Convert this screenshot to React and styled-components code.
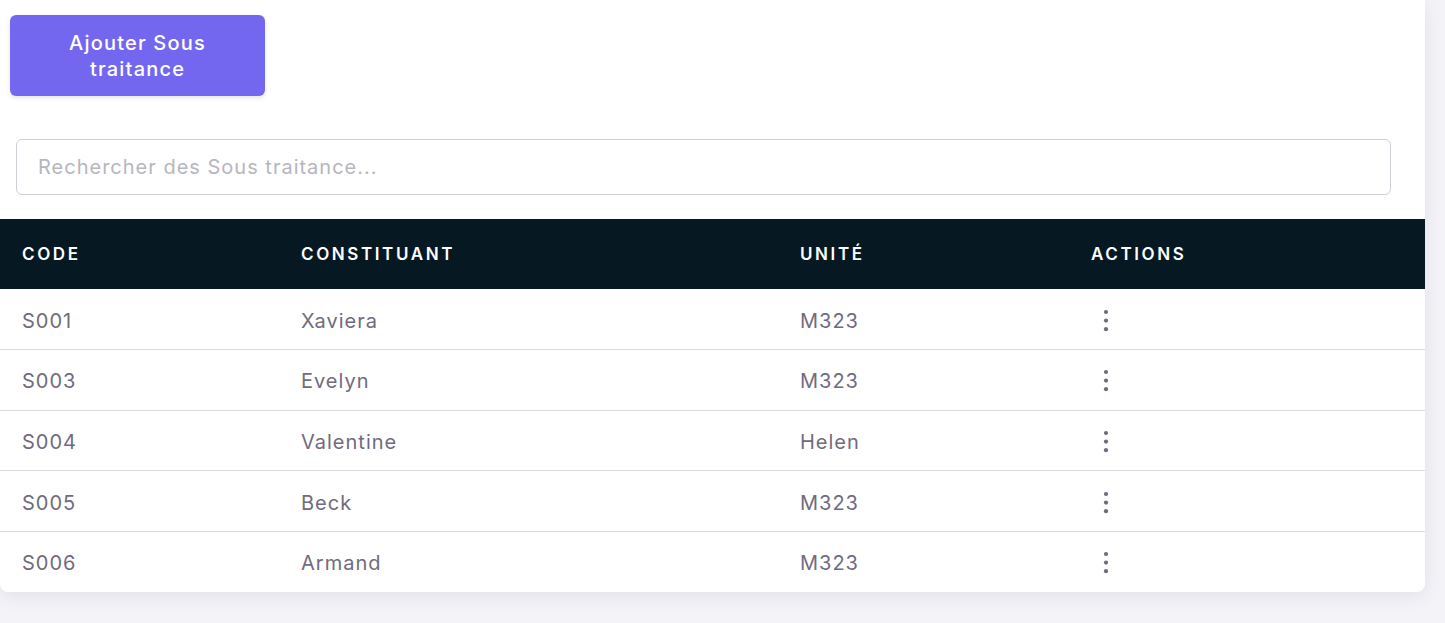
import React, { useState } from "react";
import styled, { createGlobalStyle } from "styled-components";

const GlobalStyle = createGlobalStyle`
  body {
    margin: 0;
    background: #f4f3f8;
    font-family: Inter, "Noto Sans", sans-serif;
  }
`;

const Page = styled.div`
  width: 1425px;
  padding-bottom: 31px;
`;

const Card = styled.div`
  background: #fff;
  border-radius: 0 0 8px 8px;
  box-shadow: 0 4px 18px rgba(75, 70, 92, 0.1);
  overflow: hidden;
`;

const Toolbar = styled.div`
  padding: 15px 0 0 10px;
`;

const AddButton = styled.button`
  width: 255px;
  height: 81px;
  border: none;
  border-radius: 6px;
  background: #7367f0;
  color: #fff;
  font-family: Inter, sans-serif;
  font-size: 20px;
  font-weight: 500;
  letter-spacing: 1.2px;
  line-height: 26px;
  padding: 0 40px;
  box-shadow: 0 2px 4px rgba(165, 163, 174, 0.3);
  cursor: pointer;
`;

const SearchWrap = styled.div`
  padding: 43px 34px 24px 16px;
`;

const SearchInput = styled.input`
  box-sizing: border-box;
  width: 100%;
  height: 56px;
  border: 1px solid #d0ced5;
  border-radius: 6px;
  padding: 0 21px;
  font-family: Inter, sans-serif;
  font-size: 20px;
  letter-spacing: 1px;
  color: #6f6b7d;
  outline: none;

  &::placeholder {
    color: #b7b5be;
  }
`;

const Table = styled.table`
  width: 100%;
  border-collapse: collapse;
  table-layout: fixed;
`;

const HeadCell = styled.th`
  box-sizing: border-box;
  background: #061821;
  color: #fff;
  height: 70px;
  padding: 0 0 0 22px;
  text-align: left;
  font-size: 17px;
  font-weight: 600;
  letter-spacing: 2.6px;
  width: ${(p) => p.$w || "auto"};
`;

const Row = styled.tr`
  & + & td {
    border-top: 1px solid #dbdade;
  }
`;

const Cell = styled.td`
  box-sizing: border-box;
  height: 60.6px;
  padding: 3px 0 0 22px;
  font-size: 20px;
  letter-spacing: 1px;
  color: #6f6b7d;
`;

const DotsButton = styled.button`
  border: none;
  background: none;
  padding: 0;
  margin-left: 4px;
  display: flex;
  align-items: center;
  cursor: pointer;
`;

function Dots() {
  return (
    <svg width="22" height="26" viewBox="0 0 22 26">
      <circle cx="11" cy="4" r="2.1" fill="#6f6b7d" />
      <circle cx="11" cy="12.6" r="2.1" fill="#6f6b7d" />
      <circle cx="11" cy="21.2" r="2.1" fill="#6f6b7d" />
    </svg>
  );
}

const rows = [
  { code: "S001", name: "Xaviera", unit: "M323" },
  { code: "S003", name: "Evelyn", unit: "M323" },
  { code: "S004", name: "Valentine", unit: "Helen" },
  { code: "S005", name: "Beck", unit: "M323" },
  { code: "S006", name: "Armand", unit: "M323" },
];

export default function App() {
  const [query, setQuery] = useState("");

  const filtered = rows.filter((r) =>
    (r.code + r.name + r.unit).toLowerCase().includes(query.toLowerCase())
  );

  return (
    <Page>
      <GlobalStyle />
      <Card>
        <Toolbar>
          <AddButton>Ajouter Sous traitance</AddButton>
        </Toolbar>
        <SearchWrap>
          <SearchInput
            placeholder="Rechercher des Sous traitance..."
            value={query}
            onChange={(e) => setQuery(e.target.value)}
          />
        </SearchWrap>
        <Table>
          <thead>
            <tr>
              <HeadCell $w="279px">CODE</HeadCell>
              <HeadCell $w="499px">CONSTITUANT</HeadCell>
              <HeadCell $w="291px">UNITÉ</HeadCell>
              <HeadCell>ACTIONS</HeadCell>
            </tr>
          </thead>
          <tbody>
            {filtered.map((r) => (
              <Row key={r.code}>
                <Cell>{r.code}</Cell>
                <Cell>{r.name}</Cell>
                <Cell>{r.unit}</Cell>
                <Cell>
                  <DotsButton>
                    <Dots />
                  </DotsButton>
                </Cell>
              </Row>
            ))}
          </tbody>
        </Table>
      </Card>
    </Page>
  );
}
